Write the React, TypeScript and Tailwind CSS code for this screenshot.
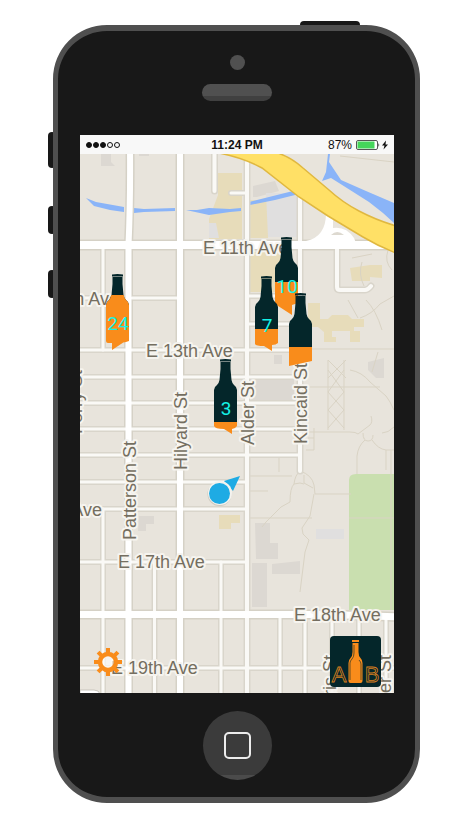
const VIEW = { x: 80, y: 154, width: 314, height: 539 }

// [path, width]
const roads: Array<[string, number]> = [
  ['M80 298h20M132 298h46M248 296h52', 3],
  ['M248 324h52', 3],
  ['M80 350h220', 3],
  ['M80 377h220M80 403h220M80 429h220M80 455h220', 3],
  ['M80 482h167M80 509h167', 3],
  ['M80 562h167M80 668h314', 3],
  ['M103 247v103M103 509v184', 3],
  ['M214.5 150v41', 4],
  ['M231 193h16', 3],
  ['M154.5 562v131M221 562v131', 3],
  ['M280 615v78M305 615v78M332 615v78M359 615v78M386 615v78', 3],
  ['M247 162v531', 4],
  ['M300 198v273', 4],
  ['M337 248V287q0 3 3 3h25q3 0 6-4', 4],
]

const mainRoads: Array<[string, number]> = [
  ['M130 150Q130.500 200 128.500 245V700', 6],
  ['M180 150v550', 6],
  ['M76 245H300L400 245', 8],
  ['M76 614.500H330L400 617', 7],
]

const footpaths = [
  'M300 471q-5 4-6 13-4 4-4 18l-9 5-15 15-4 5',
  'M300 471q12 4 14 14l1 9h36M304 475v8l9 5M294 484q7-2 10 0M314 494l-4 22-8 12 1 6 6 6-4 12-5 40',
  'M250 518h62M248 476h44M248 491h20M279 458v14',
  'M308 432h42q6 0 8 2l12-9q3-3 1-9M310 387h70',
  'M328 370l16 22-16 18 16 18M344 370l-16 22 16 18-16 18',
  'M328 360l18 18M346 360l-18 18M328 360v70M344 360v70',
  'M350 370q12 2 20 12l16 14q4 5 8 14M394 427q-6 6-12 6',
  'M363 433q0 8 5 8t5-6M365 440q-7 6-8 16v18M372 440q6 9 14 10h8M386 450v20',
  'M312 349h82M348 300l10 18M360 318q12-4 20-14l14-8M366 300q10 10 16 30',
  'M362 262q-4 12 2 24M388 250q-4 12 4 20M352 258l20-4M372 372l6-20',
  'M314 428v22h-8M308 438h6',
  'M349 518h45M391 450v160M340 156l54 6',
]

const streetLabels = [
  { text: 'E 11th Ave', x: 203, y: 254 },
  { text: 'E 13th Ave', x: 146, y: 357 },
  { text: 'E 17th Ave', x: 118, y: 568 },
  { text: 'E 18th Ave', x: 294, y: 621 },
  { text: 'E 19th Ave', x: 111, y: 674 },
  { text: 'E 12th Ave', x: 119, y: 305, end: true },
  { text: 'E 16th Ave', x: 102, y: 516, end: true },
  { text: 'Patterson St', x: 136, y: 540, vertical: true },
  { text: 'Hilyard St', x: 187, y: 470, vertical: true },
  { text: 'Alder St', x: 254, y: 445, vertical: true },
  { text: 'Kincaid St', x: 307, y: 444, vertical: true },
  { text: 'Ferry St', x: 82, y: 370, vertical: true, end: true },
  { text: 'Harris St', x: 336, y: 655, vertical: true, end: true },
  { text: 'Potter St', x: 391, y: 655, vertical: true, end: true },
]

// level is the y of the beer line, counted from the cap
const pins = [
  { id: 'patterson', x: 106, y: 274, level: 21, count: 24, foot: 'V67L20 68Q17 68 15 70L6 76V69H2Q0 69 0 67' },
  { id: 'eleventh', x: 275, y: 237, level: 45, count: 10, foot: 'V66L17 68V78L0 67' },
  { id: 'twelfth', x: 255, y: 276, level: 53, count: 7, foot: 'V67Q21 69 17 69V75L9 70Q1 70 0 68' },
  { id: 'kincaid', x: 289, y: 293, level: 54, count: null, foot: 'V68L0 73' },
  { id: 'alder', x: 214, y: 359, level: 63, count: 3, foot: 'V67Q21 70 18 70V75L10 70Q1 70 0 67' },
]

function Roads({ items, color, extra = 0 }: { items: Array<[string, number]>; color: string; extra?: number }) {
  return (
    <g fill="none" stroke={color} strokeLinecap="round">
      {items.map(([d, width]) => (
        <path key={d} d={d} strokeWidth={width + extra} />
      ))}
    </g>
  )
}

function StreetMap() {
  return (
    <svg
      viewBox={`${VIEW.x} ${VIEW.y} ${VIEW.width} ${VIEW.height}`}
      className="block w-full"
      role="img"
      aria-label="Map"
    >
      <rect x="80" y="154" width="314" height="539" fill="#e8e4dc" />

      <g fill="#e7dcba">
        <path d="M218 173h24v66h-33v-20l9-24zM250 200h18v38h-18zM250 252h32v40h-32z" />
        <path d="M350 268l20-3h12v13l-12-1v4h-18z" />
        <path d="M308 303h12v16h8l4-4h16l4 4h12v8h-10v4h6v11h-10v-11h-18v6h4v5h-12v-10l-6-5h-10z" />
        <path d="M219 515h21v8h-9v6h-12z" />
      </g>
      <g fill="#dcd8d2">
        <path d="M253 186l22-5 4 10-22 6h-4zM101 154h10v8l4 4h-14zM139 154h10v2h-10zM251 380h43v20h-43z" />
        <path d="M255 523h15v20h8v16h-22zM252 563h15v44h-15zM272 564l28-3v13h-28zM139 516h15v8h-8v7h-8z" />
        <path d="M274 355h8v9h-8zM368 362l16-4v20h-8l-8-8z" />
      </g>
      <g fill="#e0dfdf">
        <path d="M266 193h31v44h-29zM209 223h7l3 15h-10zM316 529h28v10h-28z" />
      </g>
      <path d="M394 474h-38q-7 0-7 6v130h45z" fill="#c9dfaf" />

      <g fill="none" stroke="#d9d3c4" strokeWidth="1">
        {footpaths.map((d) => (
          <path key={d} d={d} />
        ))}
      </g>

      <g fill="#8ab4f8">
        <path d="M86 198l10 4 28 5v5l-14-2-16-4zM134 208l10 1 31-1v3l-31 1-10 1zM186 210l11 0 12-2 21 1 11-1v3l-11 1-21 3z" />
        <path d="M249 202l24-6 24-6 2 4-24 6-25 5z" />
        <path d="M328 154h2l-1 8 12 18 25 11 28 12v20l-11-10-14-11-30-19-8-5-9 3 4-9z" />
      </g>

      <Roads items={roads} color="#d9d5cb" extra={3} />
      <Roads items={mainRoads} color="#d5d1c6" extra={3} />
      <Roads items={roads} color="#faf9f6" />
      <Roads items={mainRoads} color="#fff" />
      {/* on-ramp where the highway meets 11th */}
      <path
        d="M326 213L333 218V228Q346 226 354 238L358 248H306V241Q326 237 326 213Z"
        fill="#fff"
      />
      <path d="M331 235q6-6 13 0z" fill="#ddd9d0" />

      <path
        d="M219 153L278 153Q292 158 303 168L329 190Q342 202 359 211T396 226V253Q378 246 363 237L328 216L299 197L262 168Q244 158 219 153Z"
        fill="#ffe066"
        stroke="#e0b840"
        strokeWidth="1.500"
      />

      <g
        fill="#746e60"
        stroke="#f6f4ef"
        strokeWidth="4"
        strokeLinejoin="round"
        className="[font-family:'Liberation_Sans',Arial,sans-serif] text-[18px] [paint-order:stroke]"
      >
        {streetLabels.map(({ text, x, y, vertical, end }) => (
          <text
            key={text}
            transform={`translate(${x} ${y})${vertical ? ' rotate(-90)' : ''}`}
            textAnchor={end ? 'end' : 'start'}
          >
            {text}
          </text>
        ))}
      </g>

      <path d="M80 690h14q5 0 6 4h-20z" fill="#fff" stroke="#c8c5bd" />

      <path d="M224 481L240 476L233 491Z" fill="#1eabe4" />
      <circle cx="219.500" cy="494" r="12" fill="#9c9789" opacity=".35" />
      <circle cx="220" cy="493" r="12" fill="#f4f3ef" />
      <circle cx="219.500" cy="493.500" r="10.500" fill="#1eabe4" />
    </svg>
  )
}

function BottlePin({ pin }: { pin: (typeof pins)[number] }) {
  const clipId = `beer-${pin.id}`

  return (
    <button
      type="button"
      aria-label={`${pin.id} pin`}
      className="absolute w-6"
      style={{
        left: `${((pin.x - VIEW.x) / VIEW.width) * 100}%`,
        top: `${((pin.y - VIEW.y) / VIEW.height) * 100}%`,
      }}
    >
      <svg viewBox="0 0 24 80" className="block w-full">
        <clipPath id={clipId}>
          <rect x="0" y={pin.level} width="24" height="80" />
        </clipPath>
        <g fill="#04262a">
          <path d="M6 .5Q11.500-.5 17 .5V2.500H6Z" />
          <path d="M6.500 3H16.500V10L17.500 21Q18 24 20 26Q23 28 23 31V66H0V31Q0 28 3 26Q5 24 5.500 21L6.500 10Z" />
        </g>
        <path
          d={`M5.500 20H17.500Q18 24 20 26Q23 28 23 31${pin.foot}V31Q0 28 3 26Q5 24 5.500 20Z`}
          fill="#f98c1b"
          clipPath={`url(#${clipId})`}
        />
        {pin.count !== null && (
          <text
            x="12"
            y="56"
            textAnchor="middle"
            fill="#14f3e6"
            className="[font-family:Roboto,'Liberation_Sans',sans-serif] text-[19px]"
          >
            {pin.count}
          </text>
        )}
      </svg>
    </button>
  )
}

function GearIcon() {
  return (
    <svg viewBox="-14 -14 28 28" className="block size-7">
      <g fill="#f98c1b">
        {[0, 45, 90, 135, 180, 225, 270, 315].map((angle) => (
          <rect key={angle} x="-2" y="-14" width="4" height="6" transform={`rotate(${angle})`} />
        ))}
      </g>
      <circle r="8" fill="#fff" fillOpacity=".6" stroke="#f98c1b" strokeWidth="4.500" />
    </svg>
  )
}

function Logo() {
  return (
    <svg viewBox="0 0 51 51" className="block w-full">
      <rect width="51" height="51" rx="4" fill="#04262a" />
      <g
        fill="none"
        stroke="#d9801f"
        strokeWidth=".8"
        textAnchor="middle"
        className="[font-family:'Liberation_Sans',Arial,sans-serif] text-[22px]"
      >
        <text x="9" y="46">A</text>
        <text x="42" y="46">B</text>
      </g>
      <path d="M22 4h7v2h-7z" fill="#f98c1b" />
      <path
        d="M22.500 7h6v9q0 4 2 6t2 5v18q0 2-2 2h-10q-2 0-2-2V27q0-3 2-5t2-6z"
        fill="#f98c1b"
      />
      <path d="M24 9v8q0 4-2 6t-2 4v17" fill="none" stroke="#04262a" strokeWidth=".6" />
      <path d="M29 24q2 2 2 4v16" fill="none" stroke="#04262a" strokeWidth=".6" />
    </svg>
  )
}

function StatusBar() {
  return (
    <div className="grid h-[19px] grid-cols-3 items-center bg-[#f8f8f8] px-1.5 text-xs text-[#111]">
      <div className="flex gap-px">
        {[true, true, true, false, false].map((filled, i) => (
          <span
            key={i}
            className={`size-1.5 rounded-full border border-[#111] ${filled ? 'bg-[#111]' : ''}`}
          />
        ))}
      </div>
      <span className="whitespace-nowrap text-center font-bold">11:24 PM</span>
      <div className="flex items-center justify-end gap-1">
        <span>87%</span>
        <svg viewBox="0 0 32 10" className="h-2.5 w-8">
          <rect x=".5" y=".5" width="21" height="9" rx="1.500" fill="#fff" stroke="#555" />
          <rect x="1.500" y="1.500" width="17" height="7" fill="#45d65b" />
          <path d="M22.500 3q1.500 2 0 4z" fill="#111" />
          <path d="M30 .5L26 5.500h2.500L27.500 9.500L32 4.500h-2.500z" fill="#111" />
        </svg>
      </div>
    </div>
  )
}

export default function App() {
  return (
    <main className="min-h-dvh bg-white pt-[25px] pr-12 pb-6 pl-[53px] [font-family:'Liberation_Sans',Arial,sans-serif]">
      <div className="relative">
        <span className="absolute -top-1 right-[60px] h-2 w-[60px] rounded-sm bg-[#181818]" />
        <span className="absolute top-[107px] -left-[5px] h-9 w-2 rounded-sm bg-[#181818]" />
        <span className="absolute top-[181px] -left-[5px] h-7 w-2 rounded-sm bg-[#181818]" />
        <span className="absolute top-[245px] -left-[5px] h-7 w-2 rounded-sm bg-[#181818]" />

        <div className="relative rounded-[54px] border-x-5 border-y-6 border-[#4f4f4f] bg-[#181818] pr-[21px] pl-[22px]">
          <div className="flex h-[104px] flex-col items-center gap-3.5 pt-6">
            <span className="size-[15px] rounded-full bg-[#505050]" />
            <span className="h-[17px] w-[70px] rounded-full bg-linear-to-b from-[#505050] from-70% to-[#404040] to-70%" />
          </div>

          <div className="overflow-hidden">
            <StatusBar />
            <div className="relative">
              <StreetMap />
              {pins.map((pin) => (
                <BottlePin key={pin.id} pin={pin} />
              ))}
              <button type="button" aria-label="Settings" className="absolute bottom-[17px] left-3.5">
                <GearIcon />
              </button>
              <a href="#home" aria-label="AB" className="absolute right-[13px] bottom-1.5 w-[51px]">
                <Logo />
              </a>
            </div>
          </div>

          <div className="flex h-[104px] items-center justify-center">
            <button
              type="button"
              aria-label="Home"
              className="flex size-[69px] items-center justify-center rounded-full bg-linear-to-b from-[#3b3b3b] from-93% to-[#4b4b4b] to-93%"
            >
              <span className="size-[27px] rounded-[5px] border-2 border-[#ececec]" />
            </button>
          </div>
        </div>
      </div>
    </main>
  )
}
